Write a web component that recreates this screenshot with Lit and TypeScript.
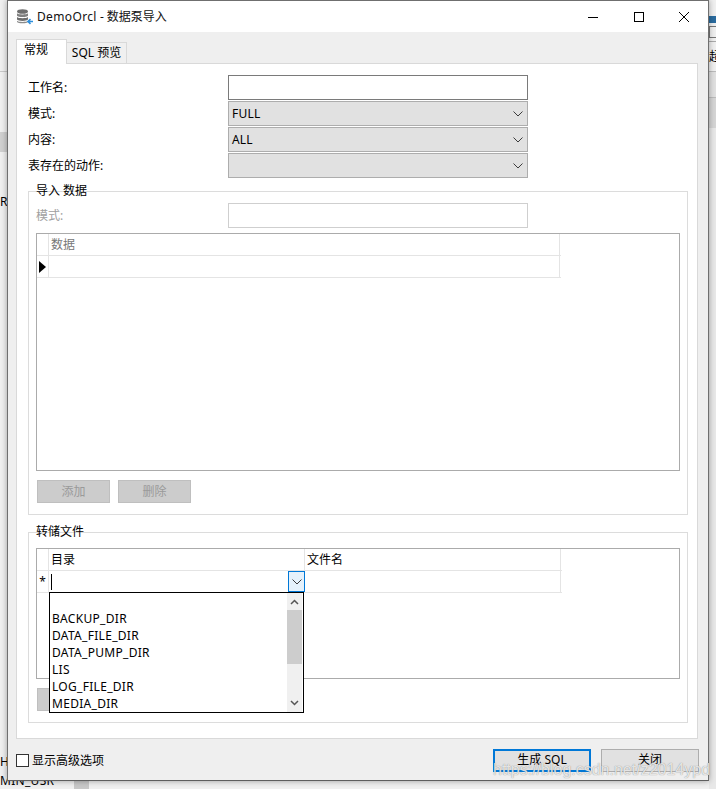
import { LitElement, html, css, svg } from "lit";
import { customElement } from "lit/decorators.js";

const chevron = svg`<svg class="chev" width="10" height="6" viewBox="0 0 10 6"><path d="M.5.5 5 5 9.500.5" fill="none" stroke="#3c3c3c" stroke-width="1"/></svg>`;

@customElement("app-root")
export class AppRoot extends LitElement {
  static styles = css`
    :host { display: block; position: relative; width: 716px; height: 789px; overflow: hidden; background: #f0f0f0;
      font: 12px/16px "Noto Sans", "Noto Sans CJK SC", sans-serif; color: #000; }
    * { box-sizing: border-box; }
    .bg { position: absolute; }
    .window { position: absolute; left: 7px; top: 0; width: 702px; height: 781px; border: 1px solid #6f6f6f; border-bottom-color:#5f5f5f; background: #efefef;
      box-shadow: 0 0 6px rgba(0,0,0,.35); display: flex; flex-direction: column; }
    .title { height: 31px; background: #fff; display: flex; align-items: center; padding-left: 8px; flex: none; font-size: 12px; color:#111; }
    .title .name { margin-left: 3px; }
    .lat { letter-spacing: .35px; }
    .ctrls { margin-left: auto; margin-right: 1px; display: flex; }
    .ctrl { width: 45.500px; height: 30px; display: flex; align-items: center; justify-content: center; }
    .client { flex: 1; padding: 8px 9px 0 8px; display: flex; flex-direction: column; min-height: 0; }
    .tabs { display: flex; align-items: flex-end; height: 24px; flex: none; position: relative; z-index: 1; margin-bottom: -1px; }
    .tab { border: 1px solid #d9d9d9; background: #f0f0f0; height: 22px; width: 60px; text-align: center; line-height: 19px; border-left: 0; }
    .tab.on { background: #fff; height: 25px; width: 51px; border-bottom: 0; border-left: 1px solid #d9d9d9; line-height: 19px; text-align: left; padding-left: 7px; }
    .panel { width: 682px; height: 676px; background: #fff; border: 1px solid #d9d9d9; padding: 11px 9px 0 11px; flex: none; }
    .form { display: grid; grid-template-columns: 200px 300px; grid-auto-rows: 25px; row-gap: 1px; align-items: center; }
    .input { height: 25px; background: #fff; border: 1px solid #7a7a7a; }
    .select { height: 25px; background: #e1e1e1; border: 1px solid #adadad; display: flex; align-items: center; padding: 0 4px 0 3px; justify-content: space-between; line-height: 22px; letter-spacing: .2px; }
    .chev { margin-left: auto; display:block; }
    .group { border: 1px solid #dcdcdc; padding: 11px 7px 0; position: relative; }
    .group.g1 { height: 324px; margin-top: 13px; }
    .group.g2 { height: 191px; margin-top: 17px; }
    .legend { position: absolute; left: 7px; top: -9px; line-height: 16px; }
    .row1 { display: grid; grid-template-columns: 192px 300px; align-items: center; height: 25px; }
    .dis { color: #a0a0a0; }
    .input.off { border-color: #cfcfcf; }
    .table { border: 1px solid #ababab; background: #fff; position: relative; width: 644px; }
    .t1 { height: 238px; margin-top: 5px; }
    .t2 { height: 131px; margin-top: 4px; }
    .tr { display: flex; height: 22px; width: 524px; border-bottom: 1px solid #e4e4e4; }
    .t2 .tr { width: 525px; }
    .cell-h { width: 12px; border-right: 1px solid #e4e4e4; flex: none; display: flex; align-items: center; justify-content: center; }
    .cell { border-right: 1px solid #e4e4e4; padding-left: 2px; line-height: 21px; }
    .head-dis { color: #777; }
    .w1 { width: 511px; }
    .w2 { width: 256px; }
    .w3 { width: 256px; }
    .edit { position: relative; display: flex; }
    .caret { width: 1px; height: 16px; background: #000; margin-top: 3px; }
    .combo { position: absolute; right: -1px; top: 0; width: 17px; height: 21px; background: #e5f1fb; border: 1px solid #0078d7; display: flex; align-items: center; justify-content: center; }
    .combo .chev { margin: 0; }
    .btns { display: flex; gap: 8px; margin: 9px 0 0 1px; }
    .btn { width: 73px; height: 23px; background: #cccccc; border: 1px solid #bfbfbf; color: #9a9a9a; text-align: center; line-height: 21px; }
    .list { position: absolute; left: 12px; top: 43px; width: 255px; height: 121px; background: #fff; border: 1px solid #000; z-index: 2; padding: 17px 0 0 2px; line-height: 17px; letter-spacing: .3px; }
    .item { height: 17px; white-space: nowrap; }
    .sb { position: absolute; right: 1px; top: 0; bottom: 0; width: 15px; background: #f0f0f0; }
    .thumb { position: absolute; left: 0; top: 17px; height: 54px; width: 15px; background: #cdcdcd; }
    .sb svg { position: absolute; left: 3px; }
    .up { top: 6px; }
    .down { bottom: 6px; }
    .ghost { position: absolute; left: 8px; top: 155px; }
    .footer { flex: 1; display: flex; align-items: center; padding-top: 2px; position: relative; }
    .cb { width: 13px; height: 13px; border: 1px solid #333; background: #fff; margin-right: 3px; }
    .fbtn { width: 98px; height: 23px; background: #e1e1e1; border: 1px solid #adadad; text-align: center; line-height: 20px; margin-left: 10px; }
    .fbtn.def { border: 2px solid #0078d7; line-height: 18px; margin-left: auto; }
    .mark { position: absolute; left: 493px; top: 758px; font: 16px/24px "Liberation Sans", sans-serif; color: rgba(255,255,255,.8); text-shadow: 0 0 1px rgba(90,90,90,.8); white-space: nowrap; z-index: 4; }
    .clip { overflow: hidden; width: 7px; line-height: 16px; }
    .strip { left: 709px; width: 7px; }
  `;

  render() {
    return html`
      <div class="bg" style="left:0;top:71px;width:7px;height:1px;background:#c9c9c9"></div>
      <div class="bg" style="left:0;top:132px;width:7px;height:20px;background:#d0d0d0"></div>
      <div class="bg clip" style="left:0;top:194px">R</div>
      <div class="bg clip" style="left:0;top:754px">H</div>
      <div class="bg" style="left:0;top:773px;line-height:16px;letter-spacing:.3px">MIN_USR</div>
      <div class="bg" style="left:74px;top:781px;width:15px;height:8px;background:#c8c8c8"></div>
      <div class="bg strip" style="top:16px;height:7px;background:#2a6b9e"></div>
      <div class="bg strip" style="top:26px;height:12px;border:1px solid #777;border-right:0"></div>
      <div class="bg strip" style="top:41px;height:1px;background:#aaa"></div>
      <div class="bg strip clip" style="top:49px">超</div>
      <div class="bg strip" style="top:71px;height:1px;background:#bbb"></div>
      <div class="bg strip" style="top:72px;height:25px;background:#e0e0e0"></div>
      <div class="bg strip" style="top:97px;height:1px;background:#bbb"></div>
      <div class="bg strip" style="top:98px;height:30px;background:#d5d5d5"></div>
      <div class="bg strip" style="top:128px;height:661px;background:#e8e8e8"></div>

      <div class="window">
        <div class="title">
          <svg width="18" height="16" viewBox="0 0 18 16">
            <ellipse cx="6.500" cy="2.500" rx="5.500" ry="2.300" fill="#6e6e6e"/>
            <path d="M1 4.200c1 1.600 10 1.600 11 0v2.600c-1 1.700-10 1.700-11 0z" fill="#808080"/>
            <path d="M1 8c1 1.600 10 1.600 11 0v2.600c-1 1.700-10 1.700-11 0z" fill="#6e6e6e"/>
            <path d="M1 11.700c1 1.600 10 1.600 11 0v1.300c-1 1.700-10 1.700-11 0z" fill="#8a8a8a"/>
            <path d="M17 12.500h-5M14.500 10.200 12 12.500l2.500 2.300" fill="none" stroke="#2e8fdc" stroke-width="1.600"/>
          </svg>
          <span class="name"><span class="lat">DemoOrcl</span> - 数据泵导入</span>
          <div class="ctrls">
            <div class="ctrl"><svg width="10" height="10" viewBox="0 0 10 10"><path d="M0 5.500h10" stroke="#000"/></svg></div>
            <div class="ctrl"><svg width="10" height="10" viewBox="0 0 10 10"><rect x=".5" y=".5" width="9" height="9" fill="none" stroke="#000"/></svg></div>
            <div class="ctrl"><svg width="10" height="10" viewBox="0 0 10 10"><path d="M0 0l10 10M10 0 0 10" stroke="#000"/></svg></div>
          </div>
        </div>
        <div class="client">
          <div class="tabs">
            <div class="tab on">常规</div>
            <div class="tab">SQL 预览</div>
          </div>
          <div class="panel">
            <div class="form">
              <div>工作名:</div><div class="input"></div>
              <div>模式:</div><div class="select">FULL ${chevron}</div>
              <div>内容:</div><div class="select">ALL ${chevron}</div>
              <div>表存在的动作:</div><div class="select">${chevron}</div>
            </div>
            <div class="group g1">
              <div class="legend">导入 数据</div>
              <div class="row1"><div class="dis">模式:</div><div class="input off"></div></div>
              <div class="table t1">
                <div class="tr"><div class="cell-h"></div><div class="cell w1 head-dis">数据</div></div>
                <div class="tr"><div class="cell-h"><svg width="7" height="12" viewBox="0 0 7 12"><path d="M0 0l7 6-7 6z"/></svg></div><div class="cell w1"></div></div>
              </div>
              <div class="btns"><div class="btn">添加</div><div class="btn">删除</div></div>
            </div>
            <div class="group g2">
              <div class="legend">转储文件</div>
              <div class="table t2">
                <div class="tr"><div class="cell-h"></div><div class="cell w2">目录</div><div class="cell w3">文件名</div></div>
                <div class="tr"><div class="cell-h">*</div><div class="cell w2 edit"><div class="caret"></div><div class="combo">${chevron}</div></div><div class="cell w3"></div></div>
                <div class="list">
                  <div class="item">BACKUP_DIR</div>
                  <div class="item">DATA_FILE_DIR</div>
                  <div class="item">DATA_PUMP_DIR</div>
                  <div class="item">LIS</div>
                  <div class="item">LOG_FILE_DIR</div>
                  <div class="item">MEDIA_DIR</div>
                  <div class="sb">
                    <svg class="up" width="9" height="6" viewBox="0 0 9 6"><path d="M1 5 4.500 1.500 8 5" fill="none" stroke="#555" stroke-width="1.500"/></svg>
                    <div class="thumb"></div>
                    <svg class="down" width="9" height="6" viewBox="0 0 9 6"><path d="M1 1 4.500 4.500 8 1" fill="none" stroke="#555" stroke-width="1.500"/></svg>
                  </div>
                </div>
              </div>
              <div class="btn ghost"></div>
            </div>
          </div>
          <div class="footer">
            <div class="cb"></div><div>显示高级选项</div>
            <div class="fbtn def">生成 SQL</div>
            <div class="fbtn">关闭</div>
          </div>
        </div>
      </div>
      <div class="mark">https://blog.csdn.net/z2014ypd</div>
    `;
  }
}
